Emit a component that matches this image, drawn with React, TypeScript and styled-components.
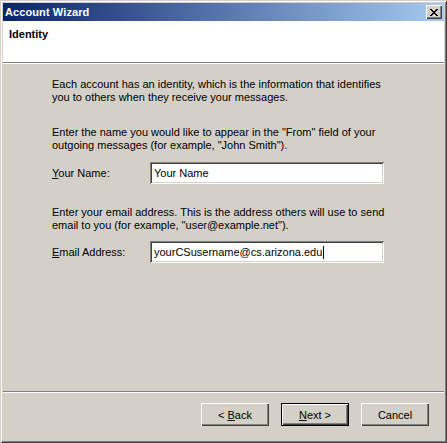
import React from "react";
import styled, { createGlobalStyle } from "styled-components";

const Global = createGlobalStyle`
  html, body { margin: 0; padding: 0; background: #d4d0c8; }
  body { font-family: "Liberation Sans", Arial, sans-serif; font-size: 11px; }
`;

const Window = styled.div`
  box-sizing: border-box;
  width: 447px;
  height: 443px;
  padding: 3px;
  background: #d4d0c8;
  display: flex;
  flex-direction: column;
  box-shadow: inset 1px 1px 0 #d4d0c8, inset -1px -1px 0 #404040,
    inset 2px 2px 0 #ffffff, inset -2px -2px 0 #808080;
`;

const TitleBar = styled.div`
  height: 18px;
  flex: none;
  display: flex;
  align-items: center;
  justify-content: space-between;
  padding: 0 2px 0 2px;
  background: linear-gradient(to right, #0a246a, #a6caf0);
`;

const TitleText = styled.span`
  color: #ffffff;
  font-weight: bold;
  font-size: 11px;
  letter-spacing: 0.1px;
`;

const CloseButton = styled.div`
  box-sizing: border-box;
  width: 16px;
  height: 14px;
  background: #d4d0c8;
  display: flex;
  align-items: center;
  justify-content: center;
  box-shadow: inset 1px 1px 0 #ffffff, inset -1px -1px 0 #404040,
    inset -2px -2px 0 #808080;
`;

const Header = styled.div`
  flex: none;
  height: 42px;
  box-sizing: border-box;
  background: #ffffff;
  padding: 7px 0 0 6px;
  font-weight: bold;
  line-height: 13px;
  border-bottom: 1px solid #808080;
  box-shadow: 0 1px 0 #ffffff;
`;

const Body = styled.div`
  flex: 1;
  padding: 15px 0 0 49px;
  display: flex;
  flex-direction: column;
`;

const Para = styled.p<{ $gap: number }>`
  margin: 0 0 ${(p) => p.$gap}px 0;
  line-height: 13px;
  color: #000;
  white-space: nowrap;
`;

const FieldRow = styled.div<{ $gap: number }>`
  display: flex;
  align-items: center;
  margin-bottom: ${(p) => p.$gap}px;
`;

const Label = styled.span`
  width: 98px;
  color: #000;
`;

const Key = styled.span`
  text-decoration: underline;
`;

const TextBox = styled.div`
  box-sizing: border-box;
  width: 234px;
  height: 22px;
  background: #ffffff;
  display: flex;
  align-items: center;
  padding-left: 4px;
  box-shadow: inset 1px 1px 0 #808080, inset -1px -1px 0 #ffffff,
    inset 2px 2px 0 #404040, inset -2px -2px 0 #d4d0c8;
`;

const Caret = styled.span`
  display: inline-block;
  width: 1px;
  height: 13px;
  background: #000;
  margin-left: 1px;
`;

const Footer = styled.div`
  flex: none;
  border-top: 1px solid #808080;
  box-shadow: inset 0 1px 0 #ffffff;
  padding: 11px 15px 14px 0;
  display: flex;
  justify-content: flex-end;
  gap: 12px;
`;

const Button = styled.div<{ $default?: boolean }>`
  box-sizing: border-box;
  width: 68px;
  height: 23px;
  display: flex;
  align-items: center;
  justify-content: center;
  background: #d4d0c8;
  color: #000;
  box-shadow: ${(p) =>
    p.$default
      ? "inset 0 0 0 1px #000, inset 1px 1px 0 1px #ffffff, inset -1px -1px 0 1px #404040, inset -2px -2px 0 1px #808080"
      : "inset 1px 1px 0 #ffffff, inset -1px -1px 0 #404040, inset -2px -2px 0 #808080"};
`;

export default function App() {
  return (
    <>
      <Global />
      <Window>
        <TitleBar>
          <TitleText>Account Wizard</TitleText>
          <CloseButton>
            <svg width="8" height="7" viewBox="0 0 8 7">
              <path d="M0 0h2v1h1v1h2V1h1V0h2v1H7v1H6v1H5v1h1v1h1v1h1v1H6V6H5V5H3v1H2v1H0V6h1V5h1V4h1V3H2V2H1V1H0z" fill="#000" />
            </svg>
          </CloseButton>
        </TitleBar>
        <Header>Identity</Header>
        <Body>
          <Para $gap={22}>
            Each account has an identity, which is the information that identifies
            <br />
            you to others when they receive your messages.
          </Para>
          <Para $gap={10}>
            Enter the name you would like to appear in the "From" field of your
            <br />
            outgoing messages (for example, "John Smith").
          </Para>
          <FieldRow $gap={22}>
            <Label>
              <Key>Y</Key>our Name:
            </Label>
            <TextBox>Your Name</TextBox>
          </FieldRow>
          <Para $gap={9}>
            Enter your email address. This is the address others will use to send
            <br />
            email to you (for example, "user@example.net").
          </Para>
          <FieldRow $gap={0}>
            <Label>
              <Key>E</Key>mail Address:
            </Label>
            <TextBox>
              yourCSusername@cs.arizona.edu
              <Caret />
            </TextBox>
          </FieldRow>
        </Body>
        <Footer>
          <Button>
            &lt;&nbsp;<Key>B</Key>ack
          </Button>
          <Button $default>
            <Key>N</Key>ext &gt;
          </Button>
          <Button>Cancel</Button>
        </Footer>
      </Window>
    </>
  );
}
